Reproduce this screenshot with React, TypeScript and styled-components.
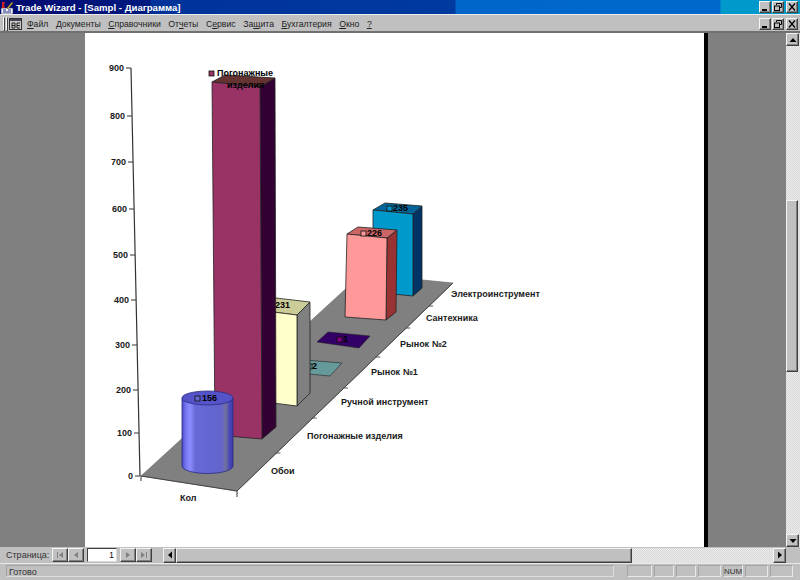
import React from "react";
import styled, { createGlobalStyle, css } from "styled-components";

const GlobalStyle = createGlobalStyle`
  html, body {
    margin: 0;
    padding: 0;
    background: #c0c0c0;
    overflow: hidden;
  }
`;

const dither = css`
  background-color: #e4e4e4;
  background-image: conic-gradient(#d8d8d8 25%, #ececec 0 50%, #d8d8d8 0 75%, #ececec 0);
  background-size: 2px 2px;
`;

const raised = css`
  box-sizing: border-box;
  background: #c0c0c0;
  border: 1px solid;
  border-color: #f4f4f4 #404040 #404040 #f4f4f4;
  box-shadow: inset -1px -1px 0 #808080;
`;

const Frame = styled.div`
  width: 800px;
  height: 580px;
  display: flex;
  flex-direction: column;
  overflow: hidden;
  background: #c0c0c0;
  font-family: "Liberation Sans", Arial, sans-serif;
  color: #111;
`;

const TitleBar = styled.div`
  height: 14px;
  flex: none;
  display: flex;
  align-items: center;
  padding: 0 2px 0 1px;
  background: linear-gradient(
    to right,
    #000a70 0,
    #001a80 150px,
    #00339a 151px,
    #003a9f 455px,
    #0066cc 456px,
    #0068cc 720px,
    #0099cc 721px
  );
`;

const TitleText = styled.span`
  margin-left: 2px;
  color: #fff;
  font-size: 9.6px;
  font-weight: bold;
  white-space: nowrap;
`;

const WindowButtons = styled.div`
  margin-left: auto;
  display: flex;
`;

const WindowButton = styled.button<{ $gap?: number }>`
  ${raised}
  width: 12px;
  height: 12px;
  padding: 0;
  margin-left: ${(p) => p.$gap ?? 0}px;
  display: flex;
  align-items: center;
  justify-content: center;
  svg {
    display: block;
  }
`;

const MenuRow = styled.div`
  height: 19px;
  flex: none;
  display: flex;
  align-items: center;
  box-sizing: border-box;
  padding: 1px 2px 0 3px;
  border-top: 1px solid #ececec;
  border-bottom: 2px solid #707070;
`;

const Grip = styled.div`
  width: 2px;
  height: 14px;
  margin-right: 1px;
  flex: none;
  ${raised}
  border-width: 1px;
  box-shadow: none;
`;

const MenuList = styled.div`
  display: flex;
  margin-left: 5px;
  gap: 7.5px;
  font-size: 8.7px;
  color: #222;
`;

const MenuItem = styled.span`
  white-space: nowrap;
  u {
    text-underline-offset: 1px;
  }
`;

const Workspace = styled.div`
  flex: 1;
  min-height: 0;
  display: flex;
`;

const SideGrey = styled.div<{ $width: number }>`
  width: ${(p) => p.$width}px;
  flex: none;
  background: #808080;
`;

const Sheet = styled.div`
  width: 619px;
  flex: none;
  background: #fff;
  border-right: 4px solid #000;
  box-sizing: content-box;
  svg {
    display: block;
  }
`;

const VScroll = styled.div`
  width: 14px;
  flex: none;
  display: flex;
  flex-direction: column;
  ${dither}
`;

const ScrollButton = styled.button<{ $w?: number; $h?: number }>`
  ${raised}
  width: ${(p) => p.$w ?? 13}px;
  height: ${(p) => p.$h ?? 13}px;
  flex: none;
  padding: 0;
  display: flex;
  align-items: center;
  justify-content: center;
  color: #000;
  svg {
    display: block;
  }
`;

const VThumb = styled.div`
  ${raised}
  width: 12px;
  height: 172px;
  margin-top: 154px;
`;

const VSpacer = styled.div`
  flex: 1;
`;

const BottomRow = styled.div`
  height: 16px;
  flex: none;
  display: flex;
  align-items: center;
  font-size: 9px;
  color: #333;
  padding-left: 6px;
`;

const PageLabel = styled.span`
  width: 46px;
  flex: none;
  white-space: nowrap;
`;

const NavButton = styled.button`
  ${raised}
  width: 16px;
  height: 14px;
  padding: 0;
  flex: none;
  display: flex;
  align-items: center;
  justify-content: center;
  color: #808080;
  svg {
    display: block;
  }
`;

const PageInput = styled.div`
  box-sizing: border-box;
  width: 30px;
  height: 14px;
  margin: 0 3px;
  flex: none;
  background: #fff;
  border: 1px solid;
  border-color: #404040 #d8d8d8 #d8d8d8 #404040;
  font-size: 9px;
  line-height: 12px;
  text-align: right;
  padding-right: 2px;
  color: #111;
`;

const HScroll = styled.div`
  margin-left: 11px;
  width: 623px;
  height: 15px;
  flex: none;
  display: flex;
  ${dither}
`;

const HThumb = styled.div`
  ${raised}
  width: 456px;
  height: 15px;
  flex: none;
`;

const StatusBar = styled.div`
  height: 17px;
  flex: none;
  box-sizing: border-box;
  display: flex;
  gap: 2px;
  padding: 1px 6px 3px 6px;
  border-top: 1px solid #e8e8e8;
  font-size: 9px;
  color: #333;
`;

const StatusMain = styled.div`
  width: 608px;
  margin-right: 11px;
  line-height: 12px;
  padding-left: 2px;
  box-sizing: border-box;
  border: 1px solid;
  border-color: #a4a4a4 #dcdcdc #dcdcdc #a4a4a4;
`;

const StatusCell = styled.div<{ $width: number }>`
  width: ${(p) => p.$width}px;
  box-sizing: border-box;
  border: 1px solid;
  border-color: #a4a4a4 #e8e8e8 #e8e8e8 #a4a4a4;
  line-height: 12px;
  text-align: center;
  font-size: 8px;
`;

const ChartLabel = styled.text`
  font-family: "Liberation Sans", Arial, sans-serif;
  font-size: 9px;
  font-weight: bold;
  fill: #1a1a1a;
`;

const ValueLabel = styled(ChartLabel)`
  fill: #000;
`;

const Arrow = ({ d }: { d: string }) => (
  <svg width="8" height="8" viewBox="0 0 8 8">
    <path d={d} fill="currentColor" />
  </svg>
);

const AppIcon = () => (
  <svg width="13" height="13" viewBox="0 0 13 13">
    <rect x="0" y="7" width="12" height="6" fill="#f0f0f8" stroke="#202060" strokeWidth="0.6" />
    <path d="M2 9h3M7 9h3M2 11h8" stroke="#203080" strokeWidth="1" />
    <path d="M1 1l3 0-1 3 1 3H1z" fill="#d02020" />
    <path d="M6 7l5-6 1 1-5 6z" fill="#d8c040" stroke="#604000" strokeWidth="0.4" />
  </svg>
);

const ChildDocIcon = () => (
  <svg width="13" height="12" viewBox="0 0 13 12" style={{ flex: "none" }}>
    <rect x="0.5" y="0.5" width="12" height="11" fill="#c8c8c8" stroke="#333" />
    <rect x="1" y="1" width="11" height="2" fill="#445" />
    <path d="M3 5h3v5H3zM3 7.5h3M8 5h3M8 7.5h3M8 10h3M8 5v5" fill="none" stroke="#222" strokeWidth="1" />
  </svg>
);

const WindowGlyphs = {
  min: <svg width="8" height="8" viewBox="0 0 8 8"><rect x="1" y="6" width="5" height="2" fill="#000" /></svg>,
  restore: (
    <svg width="8" height="8" viewBox="0 0 8 8">
      <path d="M2.5 2V.5h5v4H6" fill="none" stroke="#000" />
      <rect x=".5" y="3" width="5" height="4.5" fill="none" stroke="#000" />
    </svg>
  ),
  close: <svg width="8" height="8" viewBox="0 0 8 8"><path d="M1 .5l6 7M7 .5l-6 7" stroke="#000" strokeWidth="1.3" /></svg>,
};

const WindowControls = () => (
  <WindowButtons>
    <WindowButton>{WindowGlyphs.min}</WindowButton>
    <WindowButton $gap={1}>{WindowGlyphs.restore}</WindowButton>
    <WindowButton $gap={2}>{WindowGlyphs.close}</WindowButton>
  </WindowButtons>
);

const menu: [string, string, string][] = [
  ["", "Ф", "айл"],
  ["", "Д", "окументы"],
  ["", "С", "правочники"],
  ["От", "ч", "еты"],
  ["С", "е", "рвис"],
  ["За", "щ", "ита"],
  ["", "Б", "ухгалтерия"],
  ["", "О", "кно"],
  ["", "?", ""],
];

const yTicks = [
  [900, 131, 68],
  [800, 132, 116],
  [700, 133, 162],
  [600, 134, 209],
  [500, 135, 255],
  [400, 136, 300],
  [300, 137, 345],
  [200, 138, 390],
  [100, 139, 433],
  [0, 140, 476],
];

// y of each category tick on the right edge of the floor
const floorTicks = [453, 418, 388, 357, 328, 306];
const floorEdgeX = (y: number) => 237 + ((491 - y) * 216) / 208;

const catLabels: [string, number, number][] = [
  ["Обои", 271, 474],
  ["Погонажные изделия", 307, 439],
  ["Ручной инструмент", 341, 405],
  ["Рынок №1", 371, 375],
  ["Рынок №2", 400, 347],
  ["Сантехника", 426, 321],
  ["Электроинструмент", 451, 297],
  ["Кол", 180, 501],
];

const OX = 85;
const OY = 33;

const Box = ({ front, side, top, colors }: { front: string; side: string; top: string; colors: [string, string, string] }) => (
  <g stroke="#222" strokeWidth="0.8" strokeLinejoin="round">
    <polygon points={side} fill={colors[1]} />
    <polygon points={top} fill={colors[2]} />
    <polygon points={front} fill={colors[0]} />
  </g>
);

const Marker = ({ x, y, fill }: { x: number; y: number; fill: string }) => (
  <rect x={x} y={y} width="5" height="5" fill={fill} stroke="#111" strokeWidth="0.8" />
);

const Chart = () => (
  <svg width="619" height="514" viewBox={`${OX} ${OY} 619 514`}>
    <defs>
      <linearGradient id="cyl" x1="0" x2="1" y1="0" y2="0">
        <stop offset="0" stopColor="#4a4ac8" />
        <stop offset="0.08" stopColor="#7878f0" />
        <stop offset="0.16" stopColor="#8c8cff" />
        <stop offset="0.26" stopColor="#6868d8" />
        <stop offset="0.78" stopColor="#6464cc" />
        <stop offset="0.86" stopColor="#72729c" />
        <stop offset="0.93" stopColor="#4848b8" />
        <stop offset="1" stopColor="#3c3ca8" />
      </linearGradient>
    </defs>

    <path d="M131 68L140 476" stroke="#333" strokeWidth="1.2" fill="none" />
    {yTicks.map(([v, x, y]) => (
      <g key={v}>
        <line x1={x - 5} y1={y} x2={x} y2={y} stroke="#333" />
        <ChartLabel x={x - 7} y={y + 3} textAnchor="end">{v}</ChartLabel>
      </g>
    ))}

    <polygon points="141,476 237,491 453,283 362,274" fill="#808080" stroke="#666" strokeWidth="0.6" />
    <path d="M141 476V481M237 491V497" stroke="#333" fill="none" />
    <path d="M141 476L237 491L453 283" stroke="#444" fill="none" />
    {floorTicks.map((y) => (
      <line key={y} x1={floorEdgeX(y) - 1} y1={y} x2={floorEdgeX(y) + 4} y2={y} stroke="#555" />
    ))}
    {catLabels.map(([t, x, y]) => (
      <ChartLabel key={t} x={x} y={y}>{t}</ChartLabel>
    ))}

    <Box
      front="373,210 413,214 413,296 373,292"
      side="413,214 422,206 422,288 413,296"
      top="373,210 385,203 422,206 413,214"
      colors={["#0099cc", "#003366", "#006699"]}
    />
    <Marker x={387} y={206} fill="#0099cc" />
    <ValueLabel x={393} y={211}>235</ValueLabel>

    <Box
      front="347,234 387,238 386,320 345,317"
      side="387,238 397,230 396,312 386,320"
      top="347,234 358,227 397,230 387,238"
      colors={["#ff9999", "#993333", "#cc6666"]}
    />
    <Marker x={361} y={231} fill="#ff9999" />
    <ValueLabel x={367} y={236}>226</ValueLabel>

    <polygon points="328,332 370,336 359,348 317,342" fill="#330066" stroke="#222" strokeWidth="0.6" />
    <Marker x={337} y={337} fill="#800080" />
    <ValueLabel x={343} y={342}>1</ValueLabel>

    <polygon points="305,360 342,363 330,376 297,373" fill="#669999" stroke="#222" strokeWidth="0.6" />
    <Marker x={307} y={364} fill="#669999" />
    <ValueLabel x={312} y={369}>2</ValueLabel>

    <Box
      front="265,311 297,315 297,406 265,402"
      side="297,315 310,302 310,393 297,406"
      top="265,311 276,298 310,302 297,315"
      colors={["#ffffcc", "#808080", "#cccc99"]}
    />
    <ValueLabel x={275} y={308}>231</ValueLabel>

    <Box
      front="212,82 260,87 262,439 215,435"
      side="260,87 275,78 276,427 262,439"
      top="212,82 225,75 275,78 260,87"
      colors={["#993366", "#330033", "#663333"]}
    />
    <Marker x={209} y={71} fill="#993366" />
    <ValueLabel x={217} y={76}>Погонажные</ValueLabel>
    <ValueLabel x={227} y={88}>изделия</ValueLabel>

    <g stroke="#2a2a80" strokeWidth="0.8">
      <path d="M182 398V466A25.5 7.5 0 0 0 233 466V398Z" fill="url(#cyl)" />
      <ellipse cx="207.5" cy="398" rx="25.5" ry="7" fill="#5454c8" />
    </g>
    <Marker x={195} y={396} fill="#6666cc" />
    <ValueLabel x={202} y={401}>156</ValueLabel>
  </svg>
);

const App = () => (
  <Frame>
    <GlobalStyle />
    <TitleBar>
      <AppIcon />
      <TitleText>Trade Wizard - [Sampl - Диаграмма]</TitleText>
      <WindowControls />
    </TitleBar>
    <MenuRow>
      <Grip />
      <Grip />
      <ChildDocIcon />
      <MenuList>
        {menu.map(([before, key, after]) => (
          <MenuItem key={before + key + after}>
            {before}
            <u>{key}</u>
            {after}
          </MenuItem>
        ))}
      </MenuList>
      <WindowControls />
    </MenuRow>
    <Workspace>
      <SideGrey $width={85} />
      <Sheet>
        <Chart />
      </Sheet>
      <SideGrey $width={78} />
      <VScroll>
        <ScrollButton>
          <Arrow d="M4 2L7.5 6H.5z" />
        </ScrollButton>
        <VThumb />
        <VSpacer />
        <ScrollButton>
          <Arrow d="M.5 2h7L4 6z" />
        </ScrollButton>
      </VScroll>
    </Workspace>
    <BottomRow>
      <PageLabel>Страница:</PageLabel>
      <NavButton><Arrow d="M1 1h1v6H1zM7 1v6L3 4z" /></NavButton>
      <NavButton><Arrow d="M6 1v6L2 4z" /></NavButton>
      <PageInput>1</PageInput>
      <NavButton><Arrow d="M2 1v6l4-3z" /></NavButton>
      <NavButton><Arrow d="M1 1v6l4-3zM6 1h1v6H6z" /></NavButton>
      <HScroll>
        <ScrollButton $h={15}>
          <Arrow d="M6 .5v7L2 4z" />
        </ScrollButton>
        <HThumb />
        <VSpacer />
        <ScrollButton $h={15}>
          <Arrow d="M2 .5v7L6 4z" />
        </ScrollButton>
      </HScroll>
    </BottomRow>
    <StatusBar>
      <StatusMain>Готово</StatusMain>
      <StatusCell $width={25} />
      <StatusCell $width={20} />
      <StatusCell $width={20} />
      <StatusCell $width={23} />
      <StatusCell $width={20}>NUM</StatusCell>
      <StatusCell $width={23} />
      <StatusCell $width={23} />
    </StatusBar>
  </Frame>
);

export default App;
